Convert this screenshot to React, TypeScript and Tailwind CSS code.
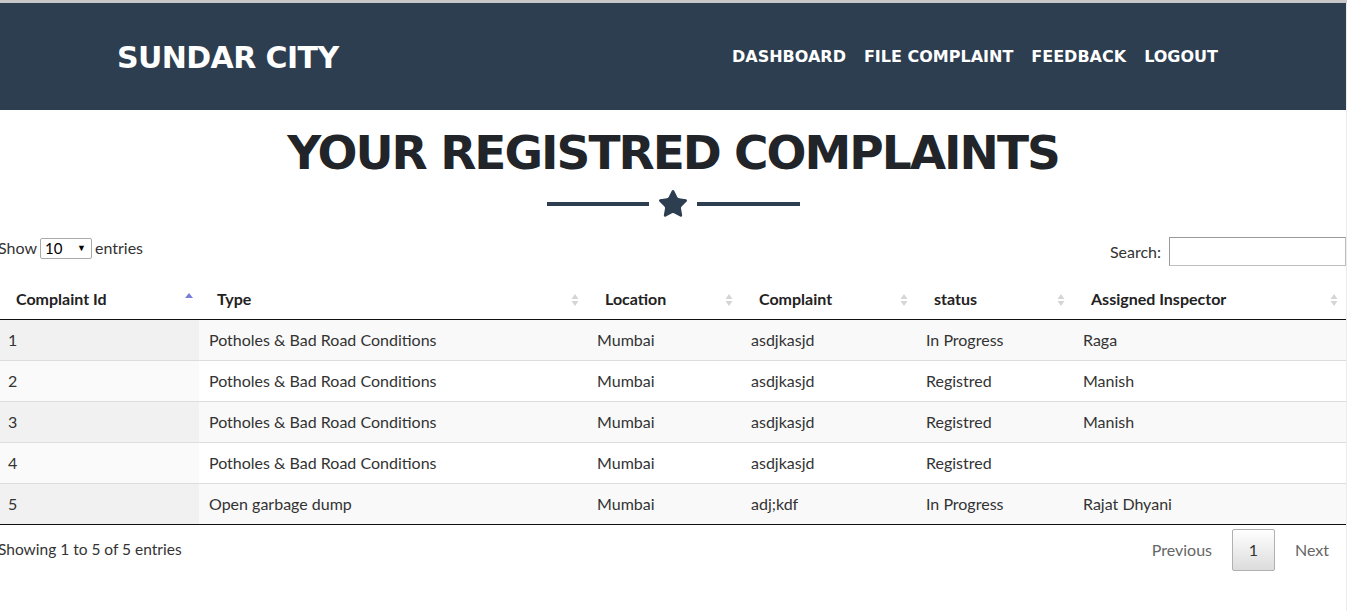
import { Star } from 'lucide-react';

const rows = [
  { id: '1', type: 'Potholes & Bad Road Conditions', location: 'Mumbai', complaint: 'asdjkasjd', status: 'In Progress', inspector: 'Raga' },
  { id: '2', type: 'Potholes & Bad Road Conditions', location: 'Mumbai', complaint: 'asdjkasjd', status: 'Registred', inspector: 'Manish' },
  { id: '3', type: 'Potholes & Bad Road Conditions', location: 'Mumbai', complaint: 'asdjkasjd', status: 'Registred', inspector: 'Manish' },
  { id: '4', type: 'Potholes & Bad Road Conditions', location: 'Mumbai', complaint: 'asdjkasjd', status: 'Registred', inspector: '' },
  { id: '5', type: 'Open garbage dump', location: 'Mumbai', complaint: 'adj;kdf', status: 'In Progress', inspector: 'Rajat Dhyani' },
];

const columns = [
  { label: 'Complaint Id', width: 'w-[201px]', sorted: true },
  { label: 'Type', width: 'w-[388px]' },
  { label: 'Location', width: 'w-[154px]' },
  { label: 'Complaint', width: 'w-[175px]' },
  { label: 'status', width: 'w-[157px]' },
  { label: 'Assigned Inspector', width: 'w-[273px]' },
];

function SortIcon({ active }: { active?: boolean }) {
  if (active) {
    return (
      <svg width="8" height="10" viewBox="0 0 8 10" className="absolute right-[6px] top-[11px]">
        <path d="M4 1 L8 6 L0 6 Z" fill="#7a7ed8" />
      </svg>
    );
  }
  return (
    <svg width="8" height="14" viewBox="0 0 8 14" className="absolute right-[8px] top-[12px]">
      <path d="M4 1 L7.5 6 L0.5 6 Z" fill="#d5d5d5" />
      <path d="M4 13 L7.5 8 L0.5 8 Z" fill="#d5d5d5" />
    </svg>
  );
}

export default function App() {
  const heading = { fontFamily: '"DejaVu Sans", "Liberation Sans", sans-serif' };
  const body = { fontFamily: 'Lato, "Liberation Sans", sans-serif' };

  return (
    <div className="min-h-screen bg-white border-t-[3px] border-[#c8c8c8] flex overflow-hidden" style={body}>
      <div className="w-[1346px] shrink-0">
        {/* Header */}
        <header className="h-[107px] bg-[#2c3e50] flex items-center justify-between pl-[117px] pr-[128px]">
          <span className="text-white font-bold text-[30px] tracking-[-0.6px] pt-[1px]" style={heading}>SUNDAR CITY</span>
          <nav className="flex items-center gap-[18px] text-white font-bold text-[16px] pt-[1px]" style={heading}>
            <span>DASHBOARD</span>
            <span>FILE COMPLAINT</span>
            <span>FEEDBACK</span>
            <span>LOGOUT</span>
          </nav>
        </header>

        {/* Title */}
        <div className="flex flex-col items-center pt-[14px]">
          <h1 className="text-[#212529] font-bold text-[47px] leading-[58px] tracking-[-2px]" style={heading}>YOUR REGISTRED COMPLAINTS</h1>
          <div className="flex items-center gap-[8px] mt-[6px]">
            <div className="w-[102px] h-[4px] bg-[#2c3e50]" />
            <Star className="w-[32px] h-[32px] text-[#2c3e50]" fill="#2c3e50" strokeWidth={1} />
            <div className="w-[103px] h-[4px] bg-[#2c3e50]" />
          </div>
        </div>

        {/* Table block */}
        <div className="-ml-[2px] w-[1348px] text-[16px] text-[#333]">
          <div className="flex items-start justify-between mt-[12px]">
            <div className="flex items-center gap-[3px] mt-[4px]">
              <span>Show</span>
              <div className="w-[52px] h-[21px] border border-[#a9a9a9] rounded-[2px] flex items-center justify-between pl-[4px] pr-[5px] text-[15px] text-black">
                <span>10</span>
                <span className="text-[9px]">▼</span>
              </div>
              <span>entries</span>
            </div>
            <div className="flex items-center gap-[8px] mt-[5px]">
              <span>Search:</span>
              <div className="w-[177px] h-[29px] border border-[#bdbdbd] border-t-[#9a9a9a] border-l-[#9a9a9a]" />
            </div>
          </div>

          <table className="w-[1348px] mt-[15px] border-collapse table-fixed">
            <thead>
              <tr className="border-b border-[#111]">
                {columns.map(c => (
                  <th key={c.label} className={`${c.width} relative text-left font-bold text-[#222] h-[38px] pl-[18px] pr-[18px] pb-[2px]`}>
                    {c.label}
                    <SortIcon active={c.sorted} />
                  </th>
                ))}
              </tr>
            </thead>
            <tbody>
              {rows.map((r, i) => {
                const odd = i % 2 === 0;
                return (
                  <tr key={r.id} className={`h-[41px] ${i > 0 ? 'border-t border-[#dddddd]' : ''} ${odd ? 'bg-[#f9f9f9]' : 'bg-white'}`}>
                    <td className={`pl-[10px] ${odd ? 'bg-[#f1f1f1]' : 'bg-[#fafafa]'}`}>{r.id}</td>
                    <td className="pl-[10px]">{r.type}</td>
                    <td className="pl-[10px]">{r.location}</td>
                    <td className="pl-[10px]">{r.complaint}</td>
                    <td className="pl-[10px]">{r.status}</td>
                    <td className="pl-[10px]">{r.inspector}</td>
                  </tr>
                );
              })}
            </tbody>
          </table>
          <div className="border-t border-[#111]" />

          <div className="flex items-start justify-between">
            <span className="mt-[13px] text-[15.5px]">Showing 1 to 5 of 5 entries</span>
            <div className="flex items-center mt-[4px] mr-[17px] text-[#666]">
              <span className="px-[20px]">Previous</span>
              <span className="w-[43px] h-[42px] flex items-center justify-center border border-[#b0b0b0] rounded-[2px] bg-gradient-to-b from-white to-[#dcdcdc] text-[#333]">1</span>
              <span className="pl-[20px]">Next</span>
            </div>
          </div>
        </div>
      </div>
      <div className="w-px bg-[#ececec]" />
    </div>
  );
}
